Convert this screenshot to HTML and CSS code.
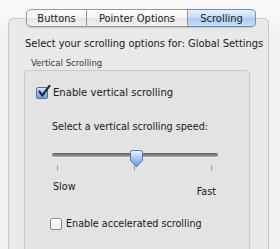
FILE: index.html
```html
<!DOCTYPE html>
<html lang="en">
<head>
    <meta charset="UTF-8">
    <title>Mouse Preferences</title>
    <link rel="stylesheet" href="styles.css">
</head>
<body>

    <div class="window">
        <div class="tabs">
            <span class="tab tab-buttons">Buttons</span>
            <span class="tab tab-pointer">Pointer Options</span>
            <span class="tab tab-scrolling active">Scrolling</span>
        </div>

        <div class="panel">
            <p class="intro">Select your scrolling options for: Global Settings</p>
            <div class="group-label">Vertical Scrolling</div>

            <div class="group">
                <label class="check vertical">
                    <span class="box checked">
                        <svg width="14" height="14" viewBox="0 0 14 14"><path d="M2.5 6.5 L5.2 10.5 L12.5 0.8" fill="none" stroke="#1c2c44" stroke-width="2.2" stroke-linecap="round" stroke-linejoin="round"/></svg>
                    </span>
                    Enable vertical scrolling
                </label>

                <div class="speed">
                    <p class="speed-label">Select a vertical scrolling speed:</p>
                    <div class="slider">
                        <div class="track"></div>
                        <svg class="knob" width="13" height="18" viewBox="0 0 13 18">
                            <defs>
                                <linearGradient id="kg" x1="0" y1="0" x2="0" y2="1">
                                    <stop offset="0" stop-color="#eef5fd"/>
                                    <stop offset="0.45" stop-color="#a9cbf1"/>
                                    <stop offset="1" stop-color="#5f98de"/>
                                </linearGradient>
                            </defs>
                            <path d="M2.5 0.5 H10.5 Q12.5 0.5 12.5 2.5 V10.5 L6.5 16.8 L0.5 10.5 V2.5 Q0.5 0.5 2.5 0.5 Z" fill="url(#kg)" stroke="#56739a" stroke-width="1"/>
                        </svg>
                    </div>
                    <div class="ticks"><i></i><i></i><i></i></div>
                    <div class="scale">
                        <span>Slow</span>
                        <span class="fast">Fast</span>
                    </div>
                </div>

                <label class="check accel">
                    <span class="box"></span>
                    Enable accelerated scrolling
                </label>
            </div>
        </div>
    </div>

</body>
</html>
```

FILE: styles.css
```css
body { margin: 0; padding: 0; background: #f3f3f3; font-family: "DejaVu Sans Condensed", "DejaVu Sans", sans-serif; font-stretch: condensed; font-size: 11px; color: #1a1a1a; overflow: hidden; }
.window { padding-top: 9px; height: 249px; box-sizing: border-box; background: linear-gradient(#fbfbfb, #f1f1f1 40px); }

.tabs { display: flex; margin-left: 26px; height: 18px; position: relative; z-index: 1; box-shadow: 0 1px 1px rgba(0, 0, 0, 0.15); border-radius: 5px; width: 230px; }
.tab { display: flex; align-items: center; justify-content: center; height: 18px; box-sizing: border-box; border: 1px solid #969696; border-left: none; background: linear-gradient(#ffffff, #f4f4f4 50%, #e6e6e6 51%, #f2f2f2); font-size: 11px; }
.tab-buttons { width: 61px; border-left: 1px solid #969696; border-radius: 5px 0 0 5px; }
.tab-pointer { width: 101px; }
.tab-scrolling { width: 68px; border-radius: 0 5px 5px 0; }
.tab.active { background: linear-gradient(#e3effc, #c3dcf7 50%, #a7cbf2 51%, #c6e0fb); border-color: #6f8db4; }

.panel { margin: -9px 0 0 8px; width: 261px; height: 260px; box-sizing: border-box; border: 1px solid #c8c8c8; border-radius: 5px; background: #e9e9e9; padding: 18px 0 0 16px; }
.intro { margin: 0; line-height: 14px; height: 14px; white-space: nowrap; }
.group-label { margin: 6px 0 0 6px; font-size: 9.5px; line-height: 12px; color: #3a3a3a; }

.group { margin: 1px 0 0 -1px; width: 226px; height: 200px; box-sizing: border-box; border: 1px solid #c9c9c9; border-radius: 4px; background: #e3e3e3; padding: 15px 0 0 11px; font-size: 10.7px; }

.check { display: flex; align-items: center; height: 14px; line-height: 14px; white-space: nowrap; }
.check.vertical { font-size: 11.2px; }
.box { width: 12px; height: 12px; box-sizing: border-box; border: 1px solid #8e8e8e; border-radius: 2px; margin-right: 5px; background: linear-gradient(#ffffff, #ececec); position: relative; flex: none; }
.box.checked { border-color: #4f6e98; background: linear-gradient(#d6e8fb, #8fbbed 55%, #6da5e6); }
.box svg { position: absolute; left: 0; top: -3px; }

.speed { margin: 20px 0 0 16px; width: 166px; }
.speed-label { margin: 0; line-height: 14px; white-space: nowrap; }
.slider { position: relative; height: 18px; margin-top: 16px; }
.track { position: absolute; left: 0; right: 0; top: 3px; height: 4px; border-radius: 2px; background: linear-gradient(#5e5e5e, #8c8c8c 60%, #a8a8a8); box-shadow: 0 1px 0 #f2f2f2; }
.knob { position: absolute; left: 78px; top: 0; }
.ticks { display: flex; justify-content: space-between; margin: -2px 6px 0 5px; height: 4px; }
.ticks i { width: 1px; height: 4px; background: #8c8c8c; }
.scale { display: flex; justify-content: space-between; align-items: flex-start; margin-top: 10px; padding: 0 2px 0 1px; line-height: 14px; }
.fast { margin-top: 5px; }

.accel { margin: 18px 0 0 14px; }
.accel .box { margin-right: 4px; }
```
